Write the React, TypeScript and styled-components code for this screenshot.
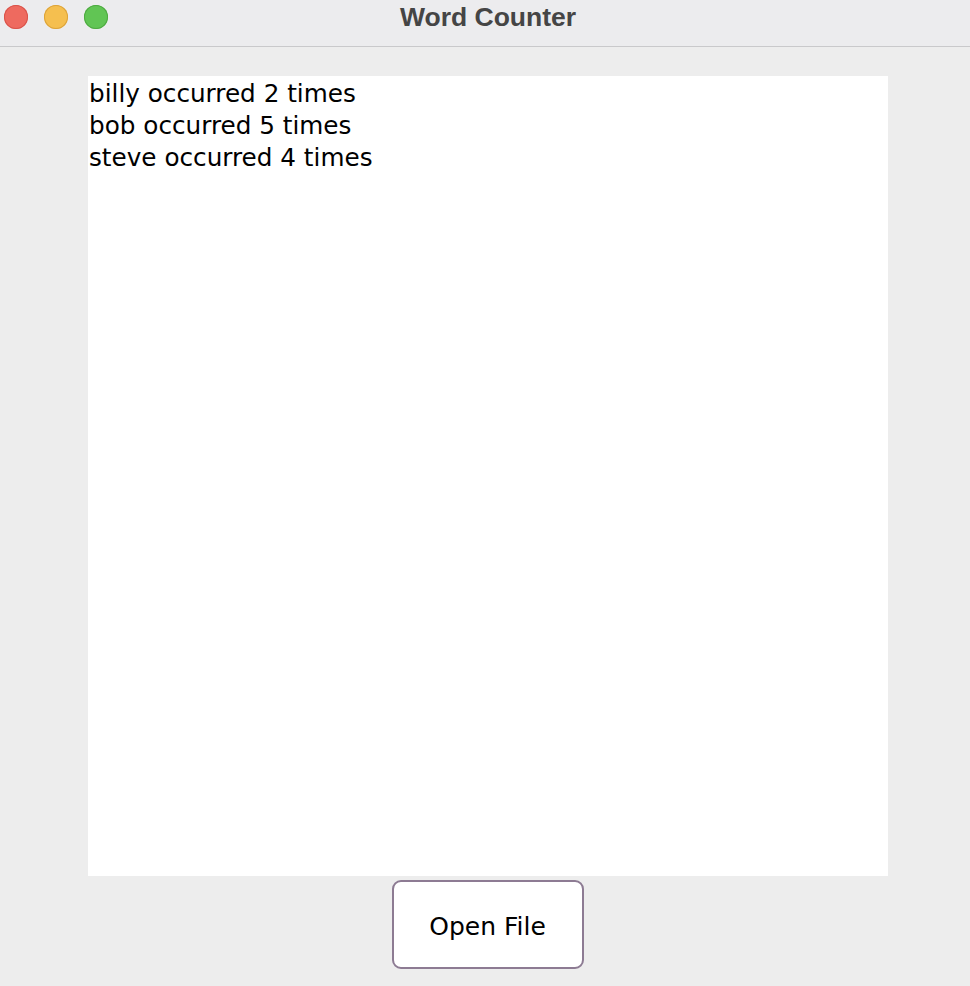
import React from "react";
import styled, { createGlobalStyle } from "styled-components";

const Global = createGlobalStyle`
  html, body { margin: 0; padding: 0; background: #ededed; }
  #root { width: 970px; height: 986px; }
`;

const Window = styled.div`
  width: 970px;
  height: 986px;
  display: flex;
  flex-direction: column;
  background: #ededed;
  overflow: hidden;
`;

const TitleBar = styled.div`
  position: relative;
  height: 46px;
  flex: none;
  background: #ececee;
  border-bottom: 1px solid #c9c9cb;
  display: flex;
  align-items: center;
  justify-content: center;
`;

const Lights = styled.div`
  position: absolute;
  left: 4px;
  top: 5px;
  display: flex;
  gap: 16px;
`;

const Light = styled.span<{ $fill: string; $edge: string }>`
  width: 24px;
  height: 24px;
  border-radius: 50%;
  background: ${(p) => p.$fill};
  box-shadow: inset 0 0 0 1px ${(p) => p.$edge};
`;

const Title = styled.div`
  font-family: "Liberation Sans", Arial, sans-serif;
  font-weight: 700;
  font-size: 26.5px;
  color: #454545;
  margin-left: 6px;
  margin-top: -12px;
`;

const Body = styled.div`
  flex: 1;
  display: flex;
  flex-direction: column;
  align-items: center;
  padding-top: 29px;
  padding-left: 6px;
`;

const TextArea = styled.div`
  width: 800px;
  height: 800px;
  background: #ffffff;
  padding: 2px 0 0 1px;
  box-sizing: border-box;
  font-family: "DejaVu Sans", Verdana, sans-serif;
  font-size: 24.7px;
  line-height: 32px;
  color: #000;
`;

const Line = styled.div`
  white-space: pre;
`;

const Button = styled.button`
  margin-top: 4px;
  margin-left: -1px;
  width: 192px;
  height: 89px;
  background: #ffffff;
  border: 2px solid #8d7b93;
  border-radius: 9px;
  font-family: "DejaVu Sans", Verdana, sans-serif;
  font-size: 25px;
  color: #000;
  cursor: pointer;
  box-sizing: border-box;
  padding: 4px 0 0;
`;

const lines = [
  "billy occurred 2 times",
  "bob occurred 5 times",
  "steve occurred 4 times",
];

export default function App() {
  return (
    <Window>
      <Global />
      <TitleBar>
        <Lights>
          <Light $fill="#ee6a5f" $edge="#d9534a" />
          <Light $fill="#f5bf4f" $edge="#dca33a" />
          <Light $fill="#61c554" $edge="#4ea941" />
        </Lights>
        <Title>Word Counter</Title>
      </TitleBar>
      <Body>
        <TextArea>
          {lines.map((l) => (
            <Line key={l}>{l}</Line>
          ))}
        </TextArea>
        <Button>Open File</Button>
      </Body>
    </Window>
  );
}
